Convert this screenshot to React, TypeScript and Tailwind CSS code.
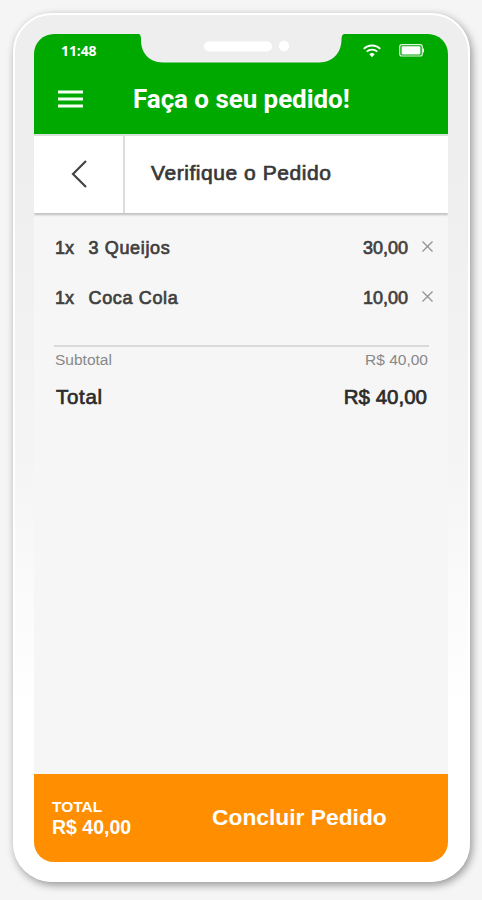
import React from "react";

interface OrderItem {
  quantity: number;
  name: string;
  price: string;
}

const items: OrderItem[] = [
  { quantity: 1, name: "3 Queijos", price: "30,00" },
  { quantity: 1, name: "Coca Cola", price: "10,00" },
];

const Notch: React.FC = () => (
  <svg
    className="absolute left-[105px] top-0"
    width="205"
    height="29"
    viewBox="0 0 205 29"
  >
    <path
      d="M0 0C1.6 1 2 2.5 2 6C2 19 10 28.400 24 28.400H180C194 28.400 202 19 202.500 6C202.500 2.500 203 1 205 0Z"
      fill="#eeeeee"
    />
    <rect x="65" y="7.500" width="68" height="10" rx="5" fill="white" />
    <circle cx="145" cy="12" r="5.300" fill="white" />
  </svg>
);

const StatusBar: React.FC = () => (
  <div className="relative flex h-[33px] items-center justify-between pl-[27px] pr-6">
    <span className="font-['Open_Sans',sans-serif] text-[14px] font-bold tracking-[-0.1px]">
      11:48
    </span>
    <div className="flex items-center gap-[18px]">
      <svg width="18" height="14" viewBox="0 0 18 14" fill="none">
        <path d="M0.800 4.800C5.300 0.300 12.700 0.300 17.200 4.800" stroke="white" strokeWidth="1.900" />
        <path d="M3.700 7.700C6.700 4.900 11.300 4.900 14.300 7.700" stroke="white" strokeWidth="1.800" />
        <path d="M6.300 10.300C7.800 8.700 10.200 8.700 11.700 10.300L9 13.300Z" fill="white" />
      </svg>
      <svg width="25" height="13" viewBox="0 0 25 13" fill="none">
        <rect x="0.700" y="0.700" width="22.600" height="11.300" rx="2.300" stroke="#e3f6e3" strokeWidth="1.200" />
        <rect x="2.600" y="2.300" width="18.800" height="8.100" rx="1" fill="white" />
        <path d="M24.400 4.500V8.500" stroke="white" />
      </svg>
    </div>
    <Notch />
  </div>
);

const Header: React.FC = () => (
  <header className="h-[100px] shrink-0 bg-[#00a900] text-white">
    <StatusBar />
    <div className="flex h-[64px] items-center pl-6">
      <svg width="25" height="18" viewBox="0 0 25 18" stroke="#f4fff4" strokeWidth="2.800">
        <path d="M0 2H25M0 9H25M0 16H25" />
      </svg>
      <h1 className="ml-[50px] whitespace-nowrap font-[Roboto,sans-serif] text-[26px] font-bold leading-none tracking-[-0.06px]">
        Faça o seu pedido!
      </h1>
    </div>
  </header>
);

const TitleBar: React.FC = () => (
  <div className="flex h-[79px] shrink-0 border-t-2 border-[#d9e2d9] bg-white shadow-[0_2px_2px_rgba(0,0,0,0.22)]">
    <button className="flex w-[91px] items-center justify-center border-r-2 border-[#dcdcdc] pb-0.5">
      <svg width="16" height="28" viewBox="0 0 16 28" fill="none">
        <path d="M15 1L2 14L15 27" stroke="#444444" strokeWidth="2.200" />
      </svg>
    </button>
    <h2 className="ml-[26px] self-center whitespace-nowrap pb-[3px] text-[21px] tracking-[0.55px] text-[#383838] [-webkit-text-stroke:0.7px_#383838]">
      Verifique o Pedido
    </h2>
  </div>
);

const OrderRow: React.FC<{ item: OrderItem }> = ({ item }) => (
  <li className="flex h-[50px] items-center whitespace-nowrap pl-[21px] pr-[15px] text-[18px] text-[#404040] [-webkit-text-stroke:0.7px_#404040]">
    <span className="w-[33.500px]">{item.quantity}x</span>
    <span className="flex-1 tracking-[0.65px]">{item.name}</span>
    <span>{item.price}</span>
    <svg className="mb-1 ml-[14px]" width="11" height="11" viewBox="0 0 11 11">
      <path d="M0.500 0.500L10.500 10.500M10.500 0.500L0.500 10.500" stroke="#929292" strokeWidth="1.300" />
    </svg>
  </li>
);

const Summary: React.FC = () => (
  <div className="ml-5 mr-[19px] mt-[22px] border-t-2 border-[#d9d9d9]">
    <div className="flex h-6 items-center justify-between px-px pt-0.5 text-[15.5px] text-[#888888]">
      <span>Subtotal</span>
      <span>R$ 40,00</span>
    </div>
    <div className="mt-2 flex h-9 items-center justify-between px-0.5 text-[20.5px] text-[#2c2c2c] [-webkit-text-stroke:0.7px_#2c2c2c]">
      <span className="tracking-[0.7px]">Total</span>
      <span>R$ 40,00</span>
    </div>
  </div>
);

const Footer: React.FC = () => (
  <footer className="flex h-[88px] shrink-0 items-center bg-[#ff8f00] pb-0.5 pl-[18px] font-bold text-white">
    <div className="w-[160px] leading-[21px]">
      <div className="text-[15.500px]">TOTAL</div>
      <div className="text-[19.500px]">R$ 40,00</div>
    </div>
    <button className="whitespace-nowrap text-[22.800px]">
      Concluir Pedido
    </button>
  </footer>
);

const App: React.FC = () => {
  return (
    <main className="h-[900px] w-[482px] overflow-hidden bg-[#f5f5f5] pl-[13px] pt-[13px] font-['Liberation_Sans',Arial,sans-serif]">
      <div className="h-[869px] w-[457px] rounded-[39px] border-2 border-white bg-gradient-to-b from-[#eeeeee] from-15% via-[#f4f4f4] via-50% to-white to-80% pl-[19px] pt-[19px] shadow-[2px_3px_9px_rgba(0,0,0,0.4)]">
        <div className="flex h-[828px] w-[414px] flex-col overflow-hidden rounded-[20px] bg-[#f6f6f6]">
          <Header />
          <TitleBar />
          <ul className="pt-[10px]">
            {items.map((item) => (
              <OrderRow key={item.name} item={item} />
            ))}
          </ul>
          <Summary />
          <div className="flex-1" />
          <Footer />
        </div>
      </div>
    </main>
  );
};

export default App;
